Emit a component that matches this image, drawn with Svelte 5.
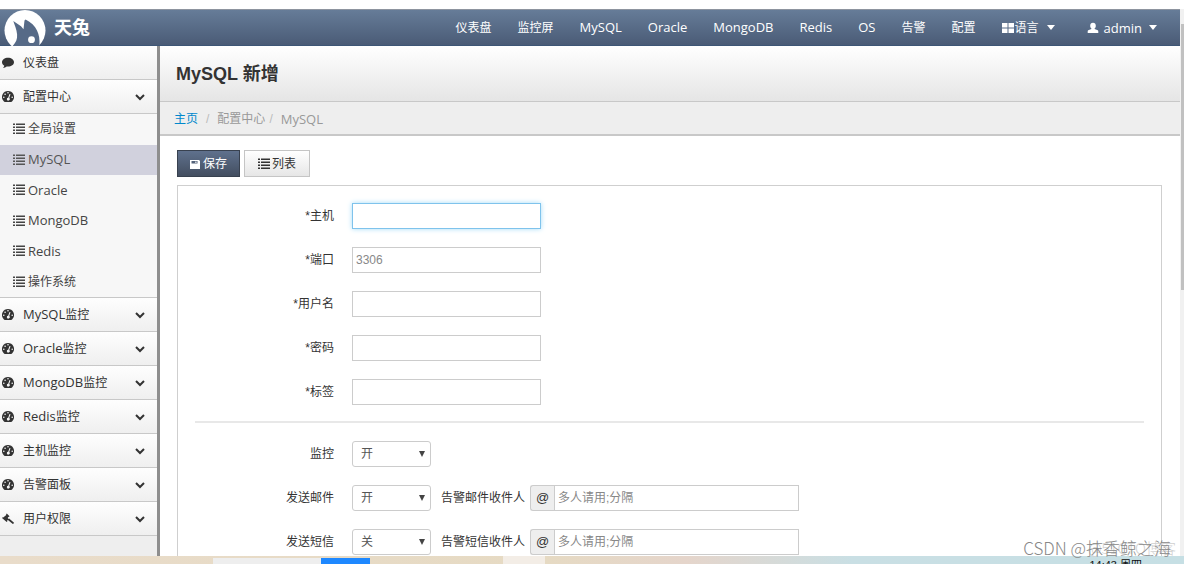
<script lang="ts">
  type Label = { latin?: string; cjk?: string };
  type Group = Label & { icon: string };

  const navItems: Label[] = [
    { cjk: '仪表盘' },
    { cjk: '监控屏' },
    { latin: 'MySQL' },
    { latin: 'Oracle' },
    { latin: 'MongoDB' },
    { latin: 'Redis' },
    { latin: 'OS' },
    { cjk: '告警' },
    { cjk: '配置' }
  ];

  const configItems: Label[] = [
    { cjk: '全局设置' },
    { latin: 'MySQL' },
    { latin: 'Oracle' },
    { latin: 'MongoDB' },
    { latin: 'Redis' },
    { cjk: '操作系统' }
  ];

  const groups: Group[] = [
    { latin: 'MySQL', cjk: '监控', icon: 'dashboard' },
    { latin: 'Oracle', cjk: '监控', icon: 'dashboard' },
    { latin: 'MongoDB', cjk: '监控', icon: 'dashboard' },
    { latin: 'Redis', cjk: '监控', icon: 'dashboard' },
    { cjk: '主机监控', icon: 'dashboard' },
    { cjk: '告警面板', icon: 'dashboard' },
    { cjk: '用户权限', icon: 'legal' }
  ];

  const fields = [
    { id: 'host', label: '*主机', type: 'text', placeholder: '' },
    { id: 'port', label: '*端口', type: 'text', placeholder: '3306' },
    { id: 'username', label: '*用户名', type: 'text', placeholder: '' },
    { id: 'password', label: '*密码', type: 'password', placeholder: '' },
    { id: 'tags', label: '*标签', type: 'text', placeholder: '' }
  ];

  let switches = $state([
    { id: 'monitor', label: '监控', value: '开', receiver: '' },
    { id: 'send_mail', label: '发送邮件', value: '开', receiver: '告警邮件收件人' },
    { id: 'send_sms', label: '发送短信', value: '关', receiver: '告警短信收件人' }
  ]);

  let active = $state('MySQL');
  let focused = $state('host');
</script>

{#snippet text(item: Label)}
  <span>{#if item.latin}<span class="latin">{item.latin}</span>{/if}{item.cjk ?? ''}</span>
{/snippet}

{#snippet icon(name: string)}
  <svg class="icon" viewBox="0 0 12 12" aria-hidden="true">
    {#if name === 'comment'}
      <path d="M6 .8C2.700.8 0 2.700 0 5.200c0 1.500.9 2.700 2.300 3.500-.2.900-.7 1.600-1.400 2.200 1.500-.1 2.900-.7 3.800-1.500.4.1.8.1 1.300.1 3.300 0 6-1.900 6-4.300S9.300.8 6 .8z" />
    {:else if name === 'dashboard'}
      <path fill-rule="evenodd" d="M6 0a6 6 0 0 0-4.800 9.600c.5.700 1 1.400 1.600 1.400h6.400c.6 0 1.100-.7 1.600-1.400A6 6 0 0 0 6 0zM1 6.300a.8.800 0 1 0 1.600 0 .8.800 0 1 0-1.600 0zM2.300 3.200a.8.800 0 1 0 1.600 0 .8.800 0 1 0-1.600 0zM5.200 1.800a.8.800 0 1 0 1.600 0 .8.800 0 1 0-1.600 0zM9.400 6.300a.8.800 0 1 0 1.600 0 .8.800 0 1 0-1.600 0zM8.500 3.200 7.200 7.100a1.400 1.400 0 1 1-1-.3l1.300-3.900z" />
    {:else if name === 'legal'}
      <path d="M4.800.6 7.500 3.200 6.900 4 6.500 3.800 5.700 5 6.500 5.900 7.100 5.400 11.800 9.400c.5.600-.5 1.800-1.300 1.400L5.900 6.900 5 7.800l.4.500-.7.700L0 5.100l.7-.8.500.2L4.300 1.900 4.100 1.300z" />
    {:else if name === 'list'}
      <path d="M0 .5h2V2H0zM3 .5h9V2H3zM0 3.500h2V5H0zM3 3.500h9V5H3zM0 6.500h2V8H0zM3 6.500h9V8H3zM0 9.500h2V11H0zM3 9.500h9V11H3z" />
    {:else if name === 'save'}
      <path fill-rule="evenodd" d="M1 2h9l1 1v8H1zM2.500 3v2.500h6V3zM6.300 3.400h1.200v1.500H6.300z" />
    {:else if name === 'windows'}
      <path d="M0 1h5.500v4.500H0zM6.500 1H12v4.500H6.500zM0 6.500h5.500V11H0zM6.500 6.500H12V11H6.500z" />
    {:else if name === 'user'}
      <path d="M6 .8c1.800 0 2.800 1.300 2.800 3 0 1.400-.5 2.300-1.200 2.800v.4l2.600.9c.8.300 1.100.8 1.100 1.600V11H.7V9.500c0-.8.3-1.300 1.100-1.600L4.400 7v-.4c-.7-.5-1.200-1.400-1.200-2.800 0-1.700 1-3 2.800-3z" />
    {/if}
  </svg>
{/snippet}

{#snippet chevron()}
  <svg class="chevron" viewBox="0 0 10 8" aria-hidden="true">
    <path d="M1 2l4 4 4-4" fill="none" stroke="currentColor" stroke-width="2" />
  </svg>
{/snippet}

<div class="screen">
  <div class="viewport">
    <div class="page">
      <header class="navbar">
        <a class="brand" href="#home">
          <svg class="logo" viewBox="0 0 42 36" aria-hidden="true">
            <circle cx="21" cy="20.500" r="20.500" fill="#fff" />
            <path d="M9.300 11 17 16.200 19.500 19.300 20.500 10.500 21.500 9.500C27 12 31 16 33 20.500c2 4 3 9 2.300 15.500H8.700c3.200-3.500 4.800-7 4.400-11.500C12.700 19 10.500 15 9.300 11z" fill="#566a87" />
            <circle cx="27.500" cy="29.700" r="3.400" fill="#fff" />
          </svg>
          <span>天兔</span>
        </a>
        <nav>
          {#each navItems as item}
            <a href="#nav">{@render text(item)}</a>
          {/each}
          <a class="dropdown" href="#language">{@render icon('windows')}<span>语言</span><i class="caret"></i></a>
          <a class="dropdown user" href="#admin">{@render icon('user')}<span class="latin">admin</span><i class="caret"></i></a>
        </nav>
      </header>

      <div class="body">
        <aside class="sidebar">
          <a class="group" href="#dashboard">{@render icon('comment')}<span>仪表盘</span></a>
          <a class="group" href="#config">{@render icon('dashboard')}<span>配置中心</span>{@render chevron()}</a>
          <div class="submenu">
            {#each configItems as item}
              <a href="#config" class:active={item.latin === active} onclick={() => (active = item.latin ?? '')}>
                {@render icon('list')}{@render text(item)}
              </a>
            {/each}
          </div>
          {#each groups as group}
            <a class="group" href="#group">{@render icon(group.icon)}{@render text(group)}{@render chevron()}</a>
          {/each}
        </aside>

        <main>
          <div class="title"><h1>MySQL 新增</h1></div>
          <div class="breadcrumb">
            <a href="#home">主页</a><i>/</i><span>配置中心</span><i>/</i><span class="latin">MySQL</span>
          </div>

          <form class="content" onsubmit={(e) => e.preventDefault()}>
            <div class="toolbar">
              <button type="submit" class="btn primary">{@render icon('save')}保存</button>
              <button type="button" class="btn">{@render icon('list')}列表</button>
            </div>

            <div class="panel">
              {#each fields as field}
                <div class="row">
                  <label class="name" for={field.id}>{field.label}</label>
                  <input
                    class="field"
                    class:focused={focused === field.id}
                    id={field.id}
                    type={field.type}
                    placeholder={field.placeholder}
                    onfocus={() => (focused = field.id)}
                  />
                </div>
              {/each}
              <hr />
              {#each switches as item}
                <div class="row">
                  <label class="name" for={item.id}>{item.label}</label>
                  <div class="select">
                    <select id={item.id} bind:value={item.value}>
                      <option>开</option>
                      <option>关</option>
                    </select>
                  </div>
                  {#if item.receiver}
                    <label class="receiver" for="{item.id}_list">{item.receiver}</label>
                    <span class="addon">@</span>
                    <input class="field wide" id="{item.id}_list" type="text" placeholder="多人请用;分隔" />
                  {/if}
                </div>
              {/each}
            </div>
          </form>
        </main>
      </div>
    </div>
    <div class="scrollbar"><div class="thumb"></div></div>
  </div>

  <footer class="taskbar">
    <span class="task light"></span>
    <span class="task blue"></span>
    <span class="task pale"></span>
    <span class="clock">14:43 周四</span>
  </footer>

  <div class="ghost">@51CTO博客</div>
  <div class="watermark">CSDN @抹香鲸之海</div>
</div>

<style>
  :global(body) {
    margin: 0;
    background: #fff;
  }

  .screen {
    position: relative;
    box-sizing: border-box;
    display: flex;
    flex-direction: column;
    height: 100vh;
    padding-top: 9px;
    overflow: hidden;
    color: #333;
    font-family: "Liberation Sans", "Noto Sans CJK SC", sans-serif;
    font-size: 12px;
    line-height: 18px;
  }

  a {
    color: inherit;
    text-decoration: none;
  }

  .latin {
    font-family: "Open Sans", "Noto Sans", sans-serif;
    font-size: 13px;
  }

  .icon {
    flex: none;
    width: 12px;
    height: 12px;
    fill: currentColor;
  }

  .viewport {
    display: flex;
    flex: 1;
    min-height: 0;
  }

  .page {
    display: flex;
    flex: 1;
    flex-direction: column;
    min-width: 0;
    overflow: hidden;
  }

  .navbar {
    box-sizing: border-box;
    display: flex;
    flex: none;
    align-items: center;
    justify-content: space-between;
    height: 37px;
    padding: 0 10px 0 4px;
    border-top: 1px solid #8d949f;
    border-bottom: 1px solid #3d5676;
    background: linear-gradient(#667c98, #4a5b76);
    color: #fff;
  }

  .brand {
    display: flex;
    align-items: center;
    gap: 8px;
    font-size: 18px;
    font-weight: bold;
  }

  .logo {
    width: 42px;
    height: 36px;
  }

  nav {
    display: flex;
    align-items: center;
  }

  nav a {
    padding: 0 13px;
  }

  .dropdown {
    display: flex;
    align-items: center;
    gap: 1px;
  }

  .user {
    gap: 5px;
    padding-left: 19px;
  }

  .caret {
    margin-left: 7px;
    border: 4px solid transparent;
    border-top: 5px solid #fff;
    border-bottom: 0;
  }

  .user .caret {
    margin-left: 2px;
  }

  .body {
    display: flex;
    flex: 1;
    min-height: 0;
  }

  .sidebar {
    flex: none;
    width: 157px;
    border-right: 3px solid #8e8e8e;
    background: #eee;
  }

  .group {
    box-sizing: border-box;
    display: flex;
    align-items: center;
    gap: 9px;
    height: 34px;
    padding: 0 12px 0 2px;
    border-bottom: 1px solid #c8c8c8;
    background: linear-gradient(#fefefe, #efefef);
  }

  .chevron {
    width: 10px;
    height: 8px;
    margin-left: auto;
  }

  .submenu {
    box-sizing: border-box;
    display: grid;
    grid-auto-rows: 1fr;
    height: 184px;
    border-bottom: 1px solid #c8c8c8;
    background: #f7f7f7;
    color: #444;
  }

  .submenu a {
    display: flex;
    align-items: center;
    gap: 3px;
    padding-left: 13px;
  }

  .submenu .active {
    background: #d1d1dd;
    color: #555;
  }

  main {
    flex: 1;
    min-width: 0;
  }

  .title {
    box-sizing: border-box;
    height: 56px;
    padding: 16px 16px 0;
    border-bottom: 1px solid #c8c8c8;
    background: linear-gradient(#fff, #e5e5e5);
  }

  h1 {
    margin: 0;
    font-size: 18px;
    line-height: 24px;
  }

  .breadcrumb {
    box-sizing: border-box;
    display: flex;
    align-items: center;
    height: 34px;
    padding: 2px 14px 0;
    border-bottom: 2px solid #c8c8c8;
    background: #eee;
    color: #999;
  }

  .breadcrumb a {
    color: #0088cc;
  }

  .breadcrumb i {
    margin: 0 8px;
    color: #bbb;
    font-style: normal;
  }

  .breadcrumb span + i {
    margin-left: 4px;
  }

  .content {
    padding: 14px 18px 18px 17px;
  }

  .toolbar {
    display: flex;
    gap: 4px;
    margin-bottom: 8px;
  }

  .btn {
    box-sizing: border-box;
    display: flex;
    align-items: center;
    gap: 2px;
    height: 27px;
    padding: 0 13px;
    border: 1px solid #c5c5c5;
    background: linear-gradient(#fff, #e6e6e6);
    color: #333;
    font: inherit;
  }

  .btn.primary {
    padding: 0 12px 0 11px;
    border-color: #38414f;
    background: linear-gradient(#5f718d, #434e60);
    color: #fff;
  }

  .panel {
    padding: 17px;
    border: 1px solid #cfcfcf;
  }

  .row {
    display: flex;
    align-items: center;
    height: 26px;
    margin-bottom: 18px;
  }

  .name {
    width: 139px;
    margin-right: 18px;
    text-align: right;
  }

  .field,
  select {
    box-sizing: border-box;
    height: 26px;
    border: 1px solid #ccc;
    border-radius: 0;
    background: #fff;
    color: #555;
    font: inherit;
    outline: none;
  }

  .field {
    width: 189px;
    padding: 0 3px;
  }

  .field::placeholder {
    color: #888;
    opacity: 1;
  }

  .field.focused {
    border-color: #7fc3ec;
    box-shadow: 0 0 5px #a5dcf8;
  }

  hr {
    height: 2px;
    margin: -2px 0 18px;
    border: 0;
    background: #e8e8e8;
  }

  .select {
    position: relative;
    width: 79px;
  }

  .select::after {
    position: absolute;
    top: 10px;
    right: 6px;
    border: 3px solid transparent;
    border-top: 6px solid #444;
    border-bottom: 0;
    content: "";
    pointer-events: none;
  }

  select {
    display: block;
    width: 100%;
    padding: 0 8px;
    border-radius: 3px;
    appearance: none;
  }

  .receiver {
    margin: 0 5px 0 10px;
  }

  .addon {
    box-sizing: border-box;
    width: 24px;
    height: 26px;
    border: 1px solid #ccc;
    border-right: 0;
    border-radius: 3px 0 0 3px;
    background: #eee;
    font-size: 13px;
    line-height: 24px;
    text-align: center;
  }

  .field.wide {
    width: 245px;
  }

  .scrollbar {
    box-sizing: border-box;
    width: 4px;
    padding-top: 15px;
    background: #f1f1f1;
  }

  .thumb {
    height: 50%;
    margin-left: 1px;
    background: #c1c1c1;
  }

  .taskbar {
    display: flex;
    flex: none;
    height: 8px;
    overflow: hidden;
    background: linear-gradient(90deg, #e9dcca, #e6dac3 46%, #e5d5cb 58%, #c9dfe4 72%, #c6dfe4);
  }

  .task {
    height: 6px;
    margin-top: 2px;
  }

  .light {
    width: 108px;
    margin-left: 213px;
    background: #eee;
  }

  .blue {
    width: 49px;
    background: #1e88ff;
  }

  .pale {
    width: 42px;
    height: 8px;
    margin: 0 0 0 133px;
    background: #f3ede6;
  }

  .clock {
    margin: 1px 42px 0 auto;
    color: #111;
    font-size: 11px;
    line-height: 16px;
  }

  .watermark,
  .ghost {
    position: absolute;
    right: 13px;
    bottom: 4px;
    color: #888;
    font-family: "Noto Sans CJK SC", sans-serif;
    font-size: 17px;
    font-weight: 300;
    line-height: 24px;
  }

  .ghost {
    right: 8px;
    color: #d0d0d0;
    font-size: 15px;
  }
</style>
